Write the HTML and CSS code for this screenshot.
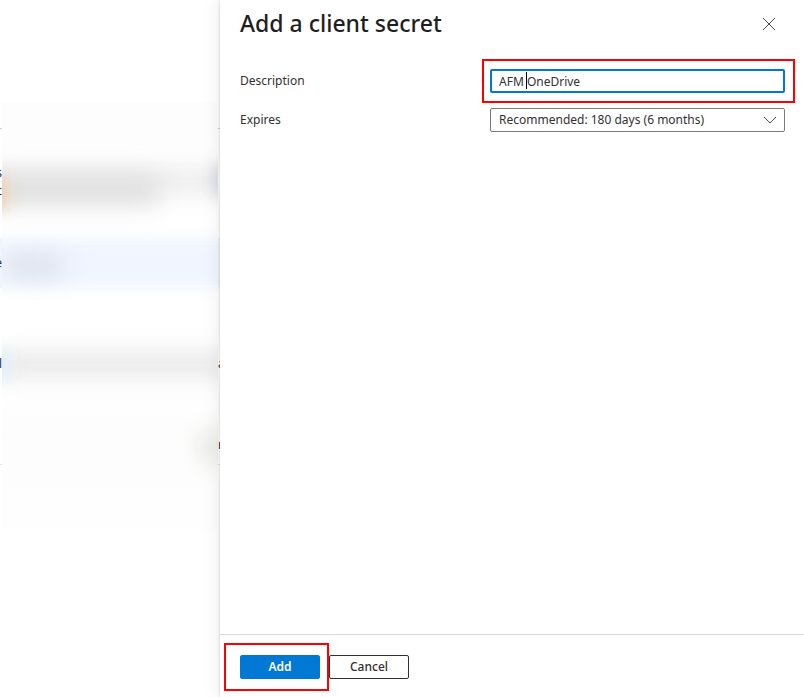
FILE: index.html
```
<!DOCTYPE html>
<html lang="en">
<head>
<meta charset="utf-8">
<meta name="viewport" content="width=device-width, initial-scale=1">
<title>Add a client secret</title>
<link rel="stylesheet" href="styles.css">
</head>
<body>
<div class="shell">
  <div class="backdrop" aria-hidden="true">
    <div class="band band-head"></div>
    <div class="band band-text"><span class="edge edge-stack">s<br>c</span></div>
    <div class="band band-selected"><span class="edge">e</span></div>
    <div class="band band-item"><span class="edge">l</span><span class="edge edge-right">a</span></div>
    <div class="band band-last"><span class="edge edge-right">r</span></div>
    <div class="veil">
      <div class="smudge smudge-row"></div>
      <div class="smudge smudge-text"></div>
      <div class="smudge smudge-dense"></div>
      <div class="smudge smudge-orange"></div>
      <div class="smudge smudge-violet"></div>
      <div class="smudge smudge-name"></div>
      <div class="smudge smudge-item"></div>
      <div class="smudge smudge-blue"></div>
      <div class="smudge smudge-green"></div>
    </div>
  </div>
  <section class="panel" aria-labelledby="panel-title">
    <header class="panel-header">
      <h1 id="panel-title">Add a client secret</h1>
      <button class="close" type="button" aria-label="Close">
        <svg width="14" height="14" viewBox="0 0 14 14"><path d="M1 1 L13 13 M13 1 L1 13"/></svg>
      </button>
    </header>
    <form class="panel-form" id="secret-form">
      <div class="field">
        <label for="description">Description</label>
        <div class="control marked marked-field">
          <input id="description" type="text" value="AFM OneDrive">
          <span class="caret"></span>
        </div>
      </div>
      <div class="field">
        <label for="expires">Expires</label>
        <div class="control">
          <select id="expires"><option>Recommended: 180 days (6 months)</option></select>
          <svg class="chevron" width="14" height="8" viewBox="0 0 14 8"><path d="M1 1 L7 7 L13 1"/></svg>
        </div>
      </div>
    </form>
    <footer class="panel-footer">
      <div class="marked marked-button"><button class="button primary" type="submit" form="secret-form">Add</button></div>
      <button class="button" type="button">Cancel</button>
    </footer>
  </section>
</div>
</body>
</html>
```
FILE: styles.css
```
* { box-sizing: border-box; }
body {
  margin: 0;
  background: #fff;
  color: #323130;
  font: 12px/18px "Noto Sans", "Open Sans", sans-serif;
}
input, select, button { font: inherit; color: inherit; }

.shell {
  display: grid;
  grid-template-columns: 220px minmax(0, 1fr);
  min-height: 100vh;
}

/* Page behind the panel */
.backdrop { position: relative; overflow: hidden; }
.band { display: flex; padding-top: 16px; }
.band-head { height: 129px; border-bottom: 1px solid #d2d2d2; }
.band-text { height: 109px; padding-top: 35px; }
.band-selected { height: 50px; background: #eff5ff; }
.band-item { height: 100px; padding-top: 67px; }
.band-last { height: 77px; padding-top: 48px; border-bottom: 1px solid #e4e4e4; }
.edge {
  display: flex;
  justify-content: flex-end;
  width: 2px;
  height: 18px;
  overflow: hidden;
  color: #1b2a5a;
}
.edge-stack { height: 36px; }
.edge-right { justify-content: flex-start; margin-left: auto; color: #5a2430; }

.veil {
  position: absolute;
  top: 102px;
  left: 2px;
  right: 2px;
  height: 430px;
  overflow: hidden;
  background: linear-gradient(#fdfdfd 0, #fdfdfd 26px, #fff 80px, #fff 290px, #fdfdfd 330px, #fefefe 430px);
}
.smudge { position: absolute; filter: blur(12px); }
.smudge-row { inset: 137px -40px auto; height: 48px; background: #f0f5ff; filter: blur(7px); }
.smudge-text { top: 68px; left: -20px; width: 250px; height: 22px; background: #eaeaea; }
.smudge-dense { top: 74px; left: -10px; width: 166px; height: 28px; background: #dedede; }
.smudge-orange { top: 75px; left: -16px; width: 20px; height: 32px; background: #f0cbaa; filter: blur(8px); }
.smudge-violet { top: 64px; right: -16px; width: 20px; height: 28px; background: #d3d5e0; filter: blur(8px); }
.smudge-name { top: 154px; left: 4px; width: 56px; height: 20px; background: #d9dee8; }
.smudge-item { top: 252px; left: -10px; width: 250px; height: 22px; background: #e6e5e5; }
.smudge-blue { top: 248px; left: -16px; width: 22px; height: 30px; background: #def1fb; filter: blur(8px); }
.smudge-green { top: 331px; right: -12px; width: 30px; height: 28px; background: #e4e6df; }

/* Panel */
.panel {
  position: relative;
  display: flex;
  flex-direction: column;
  background: #fff;
  box-shadow: 0 0 3px rgba(0, 0, 0, .18), 0 0 20px rgba(0, 0, 0, .08);
}
.panel-header {
  display: flex;
  justify-content: space-between;
  align-items: center;
  height: 48px;
  padding: 0 23px 0 20px;
}
h1 { margin: 0 0 2px; color: #1f1f1f; font: 500 23px/32px "Noto Sans", "Open Sans", sans-serif; }
.close {
  display: grid;
  place-items: center;
  width: 24px;
  height: 24px;
  padding: 0;
  border: 0;
  background: none;
}
svg { fill: none; stroke: #4c4b4a; stroke-width: 1; }

.panel-form {
  display: grid;
  flex: 1;
  align-content: start;
  gap: 15px;
  padding: 21px 19px 21px 20px;
}
.field { display: grid; grid-template-columns: 250px minmax(0, 1fr); align-items: center; }
.control { position: relative; height: 24px; }
.control input, .control select {
  display: block;
  width: 100%;
  height: 24px;
  border: 1px solid #7c7b7a;
  border-radius: 2px;
  background: #fff;
  padding: 0 8px;
  appearance: none;
  outline: 0;
}
.control input { border: 2px solid #0078d4; padding: 0 7px; }
.caret { position: absolute; top: 3px; left: 36px; width: 1px; height: 17px; background: #000; }
.chevron { position: absolute; top: 8px; right: 8px; pointer-events: none; }

.panel-footer {
  display: flex;
  gap: 9px;
  padding: 20px 20px 18px;
  border-top: 1px solid #dcdcdc;
}
.button {
  display: block;
  width: 80px;
  height: 24px;
  padding: 0;
  border: 1px solid #323130;
  border-radius: 2px;
  background: #fff;
  font-weight: 500;
}
.primary { border-color: #0078d4; background: #0078d4; color: #fff; font-weight: 600; }

/* Red callout frames */
.marked { position: relative; }
.marked::after { content: ""; position: absolute; border: 2px solid #ff0000; pointer-events: none; }
.marked-field::after { inset: -10px -10px -10px -8px; }
.marked-button::after { inset: -12px -9px -12px -16px; }
```
